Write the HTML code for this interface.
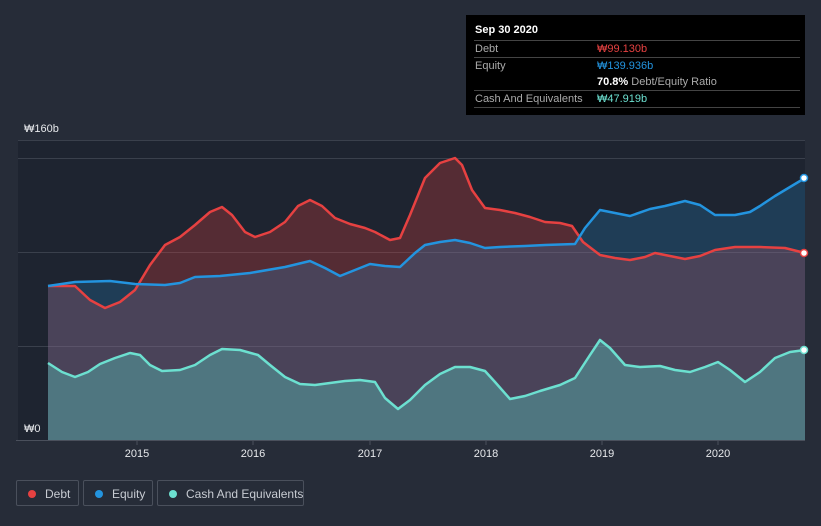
<!DOCTYPE html><html><head><style>
body{margin:0;width:821px;height:526px;background:#262c38;font-family:"Liberation Sans",sans-serif;overflow:hidden;position:relative}
.tt{position:absolute;left:466px;top:15px;width:339px;height:100px;background:#000;color:#fff;font-size:11px}
.row{position:absolute;left:8px;width:326px;border-top:1px solid #444;height:17px;line-height:17px}
.lg{position:absolute;top:480px;height:26px;border:1px solid #4a505c;border-radius:2px;color:#c7cbd2;font-size:12px;line-height:26px;box-sizing:border-box;white-space:nowrap}
.lg i{position:absolute;left:11px;top:9px;width:8px;height:8px;border-radius:50%}
</style></head><body>
<svg width="821" height="526" style="position:absolute;left:0;top:0">
<rect x="18" y="140" width="787" height="300" fill="#1e2430"/>
<g stroke="#3a404c" stroke-width="1"><line x1="18" y1="140.5" x2="805" y2="140.5"/><line x1="18" y1="158.5" x2="805" y2="158.5"/><line x1="18" y1="252.5" x2="805" y2="252.5"/><line x1="18" y1="346.5" x2="805" y2="346.5"/></g>
<path d="M48,286 75,286 90,300 105,308 120,302 135,290 150,265 165,245 180,237 195,225 210,212 222,207 232,215 245,232 255,237 270,232 285,222 298,206 310,200 322,206 335,218 350,224 365,228 375,232 390,240 400,238 410,215 425,178 440,163 455,158 462,165 472,190 485,208 500,210 515,213 530,217 545,222 560,223 572,226 583,242 600,255 615,258 630,260 645,257 655,253 670,256 685,259 700,256 715,250 735,247 760,247 785,248 805,253 L805,440 48,440Z" fill="#e64141" fill-opacity="0.28"/>
<path d="M48,286 75,282 110,281 135,284 165,285 180,283 195,277 220,276 250,273 285,267 310,261 325,268 340,276 355,270 370,264 385,266 400,267 415,253 425,245 440,242 455,240 470,243 485,248 500,247 525,246 545,245 575,244 585,228 600,210 615,213 630,216 650,209 665,206 685,201 700,205 715,215 735,215 750,212 760,206 775,196 790,187 805,178 L805,440 48,440Z" fill="#2394df" fill-opacity="0.22"/>
<path d="M48,363 62,372 75,377 88,372 100,364 115,358 130,353 140,355 150,365 162,371 180,370 195,365 210,355 222,349 240,350 258,355 270,365 285,377 300,384 315,385 330,383 345,381 360,380 375,382 385,398 398,409 410,400 425,385 440,374 455,367 470,367 485,371 495,382 510,399 525,396 540,391 560,385 575,378 590,355 600,340 610,348 625,365 640,367 660,366 675,370 690,372 705,367 718,362 730,370 745,382 760,372 775,358 790,352 805,350 L805,440 48,440Z" fill="#58d7c8" fill-opacity="0.35"/>
<g fill="none" stroke-width="2.5" stroke-linejoin="round">
<polyline stroke="#e64141" points="48,286 75,286 90,300 105,308 120,302 135,290 150,265 165,245 180,237 195,225 210,212 222,207 232,215 245,232 255,237 270,232 285,222 298,206 310,200 322,206 335,218 350,224 365,228 375,232 390,240 400,238 410,215 425,178 440,163 455,158 462,165 472,190 485,208 500,210 515,213 530,217 545,222 560,223 572,226 583,242 600,255 615,258 630,260 645,257 655,253 670,256 685,259 700,256 715,250 735,247 760,247 785,248 805,253"/>
<polyline stroke="#2394df" points="48,286 75,282 110,281 135,284 165,285 180,283 195,277 220,276 250,273 285,267 310,261 325,268 340,276 355,270 370,264 385,266 400,267 415,253 425,245 440,242 455,240 470,243 485,248 500,247 525,246 545,245 575,244 585,228 600,210 615,213 630,216 650,209 665,206 685,201 700,205 715,215 735,215 750,212 760,206 775,196 790,187 805,178"/>
<polyline stroke="#6ce0d0" points="48,363 62,372 75,377 88,372 100,364 115,358 130,353 140,355 150,365 162,371 180,370 195,365 210,355 222,349 240,350 258,355 270,365 285,377 300,384 315,385 330,383 345,381 360,380 375,382 385,398 398,409 410,400 425,385 440,374 455,367 470,367 485,371 495,382 510,399 525,396 540,391 560,385 575,378 590,355 600,340 610,348 625,365 640,367 660,366 675,370 690,372 705,367 718,362 730,370 745,382 760,372 775,358 790,352 805,350"/>
</g>
<circle cx="804" cy="253" r="3.5" fill="#fff" stroke="#e64141" stroke-width="1.5"/>
<circle cx="804" cy="178" r="3.5" fill="#fff" stroke="#2394df" stroke-width="1.5"/>
<circle cx="804" cy="350" r="3.5" fill="#fff" stroke="#6ce0d0" stroke-width="1.5"/>
<line x1="16" y1="440.5" x2="805" y2="440.5" stroke="#4a505c"/>
<g stroke="#4a505c"><line x1="137" y1="440" x2="137" y2="445"/><line x1="253" y1="440" x2="253" y2="445"/><line x1="370" y1="440" x2="370" y2="445"/><line x1="486" y1="440" x2="486" y2="445"/><line x1="602" y1="440" x2="602" y2="445"/><line x1="718" y1="440" x2="718" y2="445"/></g>
<g fill="#e6e8eb" font-size="11" text-anchor="middle" font-family="Liberation Sans"><text x="137" y="457">2015</text><text x="253" y="457">2016</text><text x="370" y="457">2017</text><text x="486" y="457">2018</text><text x="602" y="457">2019</text><text x="718" y="457">2020</text></g>
<text x="24" y="132" fill="#e6e8eb" font-size="11" font-family="Liberation Sans">₩160b</text>
<text x="24" y="432" fill="#e6e8eb" font-size="11" font-family="Liberation Sans">₩0</text>
</svg>
<div class="tt">
<div style="position:absolute;left:9px;top:9px;font-weight:bold">Sep 30 2020</div>
<div class="row" style="top:25px"><span style="color:#aaa;margin-left:1px">Debt</span><span style="position:absolute;left:123px;color:#e64141">₩99.130b</span></div>
<div class="row" style="top:42px"><span style="color:#aaa;margin-left:1px">Equity</span><span style="position:absolute;left:123px;color:#2394df">₩139.936b</span></div>
<div style="position:absolute;left:131px;top:59px;line-height:17px"><b>70.8%</b> <span style="color:#aaa">Debt/Equity Ratio</span></div>
<div class="row" style="top:75px"><span style="color:#aaa;margin-left:1px">Cash And Equivalents</span><span style="position:absolute;left:123px;color:#6ce0d0">₩47.919b</span></div>
<div class="row" style="top:92px;height:0"></div>
</div>
<div class="lg" style="left:16px;width:63px"><i style="background:#e64141"></i><span style="position:absolute;left:28px">Debt</span></div>
<div class="lg" style="left:83px;width:70px"><i style="background:#2394df"></i><span style="position:absolute;left:28px">Equity</span></div>
<div class="lg" style="left:157px;width:147px"><i style="background:#6ce0d0"></i><span style="position:absolute;left:28px">Cash And Equivalents</span></div>
</body></html>
